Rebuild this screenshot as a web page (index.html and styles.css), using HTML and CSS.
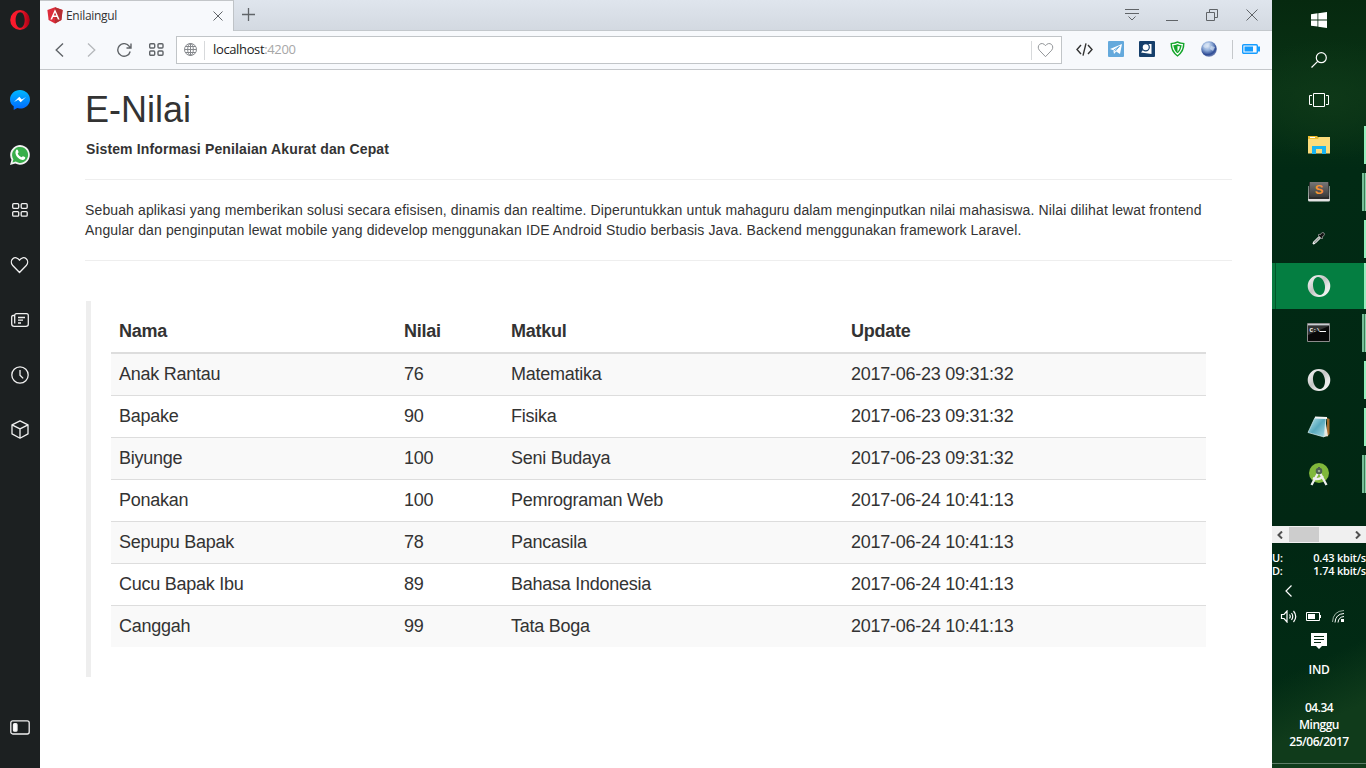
FILE: index.html
```html
<!DOCTYPE html>
<html lang="id">
<head>
<meta charset="utf-8">
<title>Enilaingul</title>
<link rel="stylesheet" href="styles.css">
</head>
<body>
<svg class="defs" width="0" height="0" aria-hidden="true">
  <defs>
    <linearGradient id="silver" x1="0" y1="0" x2="1" y2="1"><stop offset="0" stop-color="#fff"/><stop offset=".45" stop-color="#c4c4c4"/><stop offset=".7" stop-color="#e8e8e8"/><stop offset="1" stop-color="#f8f8f8"/></linearGradient>
    <linearGradient id="msg" x1="0" y1="0" x2="0" y2="1"><stop offset="0" stop-color="#00b8ff"/><stop offset="1" stop-color="#0066ff"/></linearGradient>
    <linearGradient id="red" x1="0" y1="0" x2="1" y2="0"><stop offset="0" stop-color="#ff1b2d"/><stop offset=".55" stop-color="#f0172a"/><stop offset="1" stop-color="#a70014"/></linearGradient>
    <linearGradient id="key" x1="0" y1="0" x2="0" y2="1"><stop offset="0" stop-color="#777"/><stop offset="1" stop-color="#3a3a3a"/></linearGradient>
    <linearGradient id="paper" x1="0" y1="0" x2="1" y2="1"><stop offset="0" stop-color="#c5edf2"/><stop offset=".5" stop-color="#58a9bd"/><stop offset="1" stop-color="#a9dbe4"/></linearGradient>
    <radialGradient id="globe" cx=".4" cy=".3" r=".75"><stop offset="0" stop-color="#e4edf9"/><stop offset=".4" stop-color="#8facd8"/><stop offset=".75" stop-color="#2f4c95"/><stop offset="1" stop-color="#8997bf"/></radialGradient>
    <symbol id="opera-silver" viewBox="0 0 24 24"><ellipse cx="12" cy="12" rx="8.600" ry="9.800" fill="none" stroke="url(#silver)" stroke-width="0"/><path fill="url(#silver)" fill-rule="evenodd" d="M12 1a11.300 11 0 1 0 0 22 11.300 11 0 0 0 0-22ZM10.800 3C14 2.600 17.300 6.500 17.900 11.500S16.600 20.700 13.200 21 6.700 17.500 6.100 12.500 7.400 3.400 10.800 3Z"/></symbol>
    <symbol id="heart" viewBox="0 0 18 18"><path d="M9 16.500 2 9.200C.3 7 .6 4.200 2.300 2.700c2-1.700 5-1.200 6.700 1.500 1.700-2.700 4.700-3.200 6.700-1.500C17.400 4.200 17.700 7 16 9.200Z"/></symbol>
  </defs>
</svg>
<div class="screen">
  <aside class="sidebar">
    <div class="side-logo"><svg width="20" height="20" viewBox="0 0 20 20"><path fill="url(#red)" fill-rule="evenodd" d="M10 0a9.800 10 0 1 0 0 20 9.800 10 0 0 0 0-20Zm.2 2.200c2.700 0 4.500 3.400 4.500 7.800s-1.800 7.800-4.500 7.800S5.600 14.400 5.600 10s1.900-7.800 4.600-7.800Z"/></svg></div>
    <div class="side-item"><svg width="20" height="20" viewBox="0 0 20 20"><path fill="url(#msg)" d="M10 0C4.400 0 0 4.200 0 9.400c0 2.900 1.400 5.200 3.700 6.900V20l3.500-1.900c.9.300 1.800.4 2.800.4 5.600 0 10-4 10-9.100S15.600 0 10 0Z"/><path fill="#fff" d="m4 12 5.300-5.200 2.500 2.600L16 7l-5.300 5.200-2.500-2.500Z"/></svg></div>
    <div class="side-item"><svg width="20" height="20" viewBox="0 0 20 20"><path fill="#f3f3f3" d="m0 20 1.500-5.200A9.800 9.800 0 1 1 5.300 18.500Z"/><path fill="#38ae4a" d="m2.500 17.500.9-3.200a8 8 0 1 1 2.300 2.300Z"/><path fill="#fff" d="M6.200 5c.7-.7 1.400-.5 1.700.3l.7 1.700c.1.500-.7 1.200-.9 1.600.8 1.800 2 3 3.800 3.700.5-.3 1-1.300 1.500-1.100l1.900.9c.6.300.3 1.400-.1 1.900-1.500 1.600-4.200.9-6.200-.7C6.400 11.500 4.300 8 6.200 5Z"/></svg></div>
    <div class="side-item"><svg class="line" width="17" height="14" viewBox="0 0 17 14"><rect x=".7" y=".7" width="6" height="4.600" rx="1"/><rect x="9.200" y=".7" width="6" height="4.600" rx="1"/><rect x=".7" y="8.600" width="6" height="4.600" rx="1"/><rect x="9.200" y="8.600" width="6" height="4.600" rx="1"/></svg></div>
    <div class="side-item"><svg class="line" width="20" height="18" viewBox="0 0 20 18"><use href="#heart" width="19" height="18"/></svg></div>
    <div class="side-item"><svg class="line" width="19" height="14" viewBox="0 0 19 14"><path d="M4 2.500H2Q.7 2.500.7 4v7q0 2.300 2.500 2.300H15q2.300 0 2.300-2V2.500Q17.300.7 15.500.7h-10Q3.700.7 3.700 2.500v8M7 4.500h7M7 7.200h5M7 10h3"/></svg></div>
    <div class="side-item"><svg class="line" width="19" height="18" viewBox="0 0 19 18"><circle cx="9" cy="9" r="8.200"/><path d="M9 4v5.200l3.200 3.200"/></svg></div>
    <div class="side-item"><svg class="line" width="19" height="19" viewBox="0 0 19 19"><path d="m9 .9 8 4v9l-8 4.300-8-4.300v-9Zm-8 4 8 4 8-4M9 9v9"/></svg></div>
    <div class="side-foot"><svg class="line" width="20" height="15" viewBox="0 0 20 15"><rect x=".8" y=".8" width="18.400" height="13.200" rx="2"/><rect x="3.500" y="3.700" width="3.500" height="7.500" rx="1" fill="#fff"/></svg></div>
  </aside>

  <main class="browser">
    <header class="tabbar">
      <div class="tab">
        <svg class="favicon" width="16" height="17" viewBox="0 0 16 17"><path fill="#dd2b3a" d="m8 .3 7.600 2.700-1.200 10L8 16.600 1.600 13 .4 3Z"/><path fill="#b52e31" d="m8 .3 7.600 2.700-1.200 10L8 16.600Z"/><path fill="#fff" fill-rule="evenodd" d="M8 2.300 3.400 12.400h1.700l1-2.300h3.800l1 2.300h1.700ZM8 5.500l1.300 3.100H6.700Z"/></svg>
        <span class="tab-title">Enilaingul</span>
        <svg class="stroke" width="10" height="10" viewBox="0 0 10 10"><path d="m.5.500 9 9m0-9-9 9"/></svg>
      </div>
      <svg class="newtab stroke cross" width="13" height="13" viewBox="0 0 13 13"><path d="M6.500 0v13M0 6.500h13"/></svg>
      <div class="window-controls">
        <svg class="stroke" width="14" height="12" viewBox="0 0 14 12"><path d="M0 .5h14M0 4.500h14M3.500 7.500 7 11l3.500-3.500"/></svg>
        <svg class="stroke" width="12" height="12" viewBox="0 0 12 12"><path d="M0 11.500h12"/></svg>
        <svg class="stroke" width="12" height="12" viewBox="0 0 12 12"><path d="M.5 3.500h8v8h-8zM3.500 3V.5h8v8H9"/></svg>
        <svg class="stroke" width="12" height="12" viewBox="0 0 12 12"><path d="m.5.500 11 11m0-11-11 11"/></svg>
      </div>
    </header>
    <nav class="toolbar">
      <div class="nav-buttons">
        <svg class="stroke bold" width="9" height="14" viewBox="0 0 9 14"><path d="M8 .5 1.200 7 8 13.500"/></svg>
        <svg class="stroke pale" width="9" height="14" viewBox="0 0 9 14"><path d="M1 .5 7.800 7 1 13.500"/></svg>
        <svg class="stroke bold" width="15" height="14" viewBox="0 0 15 14"><path d="M13.200 8.500A6.300 6.300 0 1 1 12.300 3.400L13.700 5M14 .5V5H9.500"/></svg>
        <svg class="stroke bold" width="15" height="13" viewBox="0 0 15 13"><rect x=".7" y=".7" width="5" height="4.300" rx="1"/><rect x="9" y=".7" width="5" height="4.300" rx="1"/><rect x=".7" y="8" width="5" height="4.300" rx="1"/><rect x="9" y="8" width="5" height="4.300" rx="1"/></svg>
      </div>
      <div class="address">
        <svg class="stroke globe" width="13" height="13" viewBox="0 0 13 13"><circle cx="6.500" cy="6.500" r="6"/><ellipse cx="6.500" cy="6.500" rx="2.800" ry="6"/><path d="M6.500.5v12M.5 6.500h12M1.500 3.500h10M1.500 9.500h10"/></svg>
        <i class="divider"></i>
        <span class="url">localhost<span class="port">:4200</span></span>
        <i class="divider end"></i>
        <svg class="stroke globe" width="17" height="16"><use href="#heart" width="17" height="16"/></svg>
      </div>
      <div class="extensions">
        <svg class="stroke dark" width="17" height="13" viewBox="0 0 17 13"><path d="M5 2 1 6.500 5 11M12 2l4 4.500-4 4.500M10 .3 7 12.700"/></svg>
        <svg width="16" height="16" viewBox="0 0 16 16"><rect width="16" height="16" rx="1" fill="#64a9dc"/><path fill="#fff" d="m2 8 12-5-2 10-3.800-2.500L6 13l-.7-3.700Z"/><path fill="none" stroke="#64a9dc" d="m5.500 9.300 6-4-4.500 5"/></svg>
        <svg width="16" height="16" viewBox="0 0 16 16"><rect width="16" height="16" rx="1" fill="#163f6b"/><path fill="#fff" d="M6 3h6.500v10L2 11.500 4 9Z"/><circle cx="6.700" cy="6.300" r="3.600" fill="#fff" stroke="#163f6b" stroke-width="1.200"/></svg>
        <svg width="15" height="16" viewBox="0 0 15 16"><path fill="#14a62b" d="M.5 2Q4 2 7.500.3 11 2 14.500 2q.3 9-7 13.700Q.2 11 .5 2Z"/><path fill="none" stroke="#fff" stroke-width="1.200" d="M2.700 3.700q2.800 0 4.800-1.200 2 1.200 4.800 1.200-.3 5.800-4.800 9.500-4.500-3.700-4.800-9.500Z"/><path fill="#fff" d="M7.500 5v6Q9.700 8.500 10 5.300q-1.300 0-2.500-.3Z"/></svg>
        <svg width="16" height="16" viewBox="0 0 16 16"><circle cx="8" cy="8" r="7.800" fill="url(#globe)"/><path fill="#d6e3f4" opacity=".65" d="M2 5q3-4 7-3L7 6 4 7zM10 5l4 1-2 4-3-2z"/></svg>
        <i class="ext-divider"></i>
        <svg width="18" height="10" viewBox="0 0 18 10"><rect x=".7" y=".7" width="14.600" height="8.600" rx="1" fill="none" stroke="#149cff" stroke-width="1.400"/><rect x="2.500" y="2.500" width="8.500" height="5" fill="#149cff"/><path fill="#149cff" d="M16 2.500h2v5h-2z"/></svg>
      </div>
    </nav>

    <section class="page">
      <h1 class="title">E-Nilai</h1>
      <p class="tagline">Sistem Informasi Penilaian Akurat dan Cepat</p>
      <hr class="rule">
      <p class="intro">Sebuah aplikasi yang memberikan solusi secara efisisen, dinamis dan realtime. Diperuntukkan untuk mahaguru dalam menginputkan nilai mahasiswa. Nilai dilihat lewat frontend<br>Angular dan penginputan lewat mobile yang didevelop menggunakan IDE Android Studio berbasis Java. Backend menggunakan framework Laravel.</p>
      <hr class="rule">
      <blockquote class="quote">
        <table class="grades">
          <colgroup><col class="c-name"><col class="c-score"><col class="c-course"><col></colgroup>
          <thead><tr><th>Nama</th><th>Nilai</th><th>Matkul</th><th>Update</th></tr></thead>
          <tbody>
            <tr><td>Anak Rantau</td><td>76</td><td>Matematika</td><td>2017-06-23 09:31:32</td></tr>
            <tr><td>Bapake</td><td>90</td><td>Fisika</td><td>2017-06-23 09:31:32</td></tr>
            <tr><td>Biyunge</td><td>100</td><td>Seni Budaya</td><td>2017-06-23 09:31:32</td></tr>
            <tr><td>Ponakan</td><td>100</td><td>Pemrograman Web</td><td>2017-06-24 10:41:13</td></tr>
            <tr><td>Sepupu Bapak</td><td>78</td><td>Pancasila</td><td>2017-06-24 10:41:13</td></tr>
            <tr><td>Cucu Bapak Ibu</td><td>89</td><td>Bahasa Indonesia</td><td>2017-06-24 10:41:13</td></tr>
            <tr><td>Canggah</td><td>99</td><td>Tata Boga</td><td>2017-06-24 10:41:13</td></tr>
          </tbody>
        </table>
      </blockquote>
    </section>
  </main>

  <aside class="taskbar">
    <div class="sys"><svg width="16" height="16" viewBox="0 0 16 16"><path fill="#fff" d="M0 2.200 6.500 1.300v6.200H0ZM7.300 1.200 16 0v7.500H7.300ZM0 8.400h6.500v6.200L0 13.700ZM7.300 8.400H16V16l-8.700-1.200Z"/></svg></div>
    <div class="sys"><svg class="white" width="16" height="16" viewBox="0 0 16 16"><circle cx="10.300" cy="5.700" r="5"/><path d="M6.700 9.300.5 15.500"/></svg></div>
    <div class="sys"><svg class="white crisp" width="20" height="14" viewBox="0 0 20 14"><path d="M4.500.5h11v13h-11zM3 2.500H.5v9H3M17 2.500h2.500v9H17"/></svg></div>
    <div class="apps">
      <div class="app"><svg width="22" height="18" viewBox="0 0 22 18"><path fill="#eebd31" d="M0 0h9l1 1h12v16H0Z"/><path fill="#fbdc7c" d="M0 3h10l1-2h11v16.500H0Z"/><path fill="#19b5f1" d="M4 10h14v8h-4v-5H8v5H4Z"/><path fill="#fff" d="M2 1h5v1H2z"/></svg></div>
      <div class="app multi"><svg width="24" height="22" viewBox="0 0 24 22"><path fill="#e4e4e4" d="M1.500 5 1 19q0 1.500 1.500 1.500h19Q23 20.500 23 19L22.500 5Z"/><path fill="#2c2c2c" d="M2 1h20l.3 17H1.700Z"/><path fill="url(#key)" d="M3 1h18l.8 13.500-1.500 1.500H3.700l-1.500-1.500Z"/><text x="12" y="13" text-anchor="middle" class="key-label">S</text></svg></div>
      <div class="app"><svg width="13" height="13" viewBox="0 0 13 13"><path fill="#999" stroke="#fff" d="m1 12 .5-2L7 4.500 8.500 6 3 11.500Z"/><path fill="#111" stroke="#aaa" stroke-width=".7" d="m6 3 1.200-.8L8 3l1.500-2q1.500-1 2.500 0t0 2.500L10 5l.8 1L10 7Z"/></svg></div>
      <div class="app active"><svg width="24" height="24"><use href="#opera-silver"/></svg></div>
      <div class="app multi"><svg width="23" height="19" viewBox="0 0 23 19"><path fill="#080808" stroke="#8b8b8b" d="M.5.500h22v18H.5z"/><path fill="#c8cdd0" d="M1 1h21v1.500H1z"/><path fill="#333" d="M1 3h21L1 12Z"/><text x="2.500" y="9" class="prompt">C:\</text><path stroke="#fff" d="M13 8.500h6"/></svg></div>
      <div class="app"><svg width="24" height="24"><use href="#opera-silver"/></svg></div>
      <div class="app"><svg width="24" height="22" viewBox="0 0 24 22"><path fill="#a76c2d" d="m20 2 2.500 1v15L20 21Z"/><path fill="#e8e8df" d="m18 2 3 18-4 1Z"/><path fill="url(#paper)" stroke="#d9f1f3" stroke-width=".7" d="M8 1.500 19 2l-2 19-16-4.500Z"/><path stroke="#f5f5f5" stroke-width="2" d="m8 1.500 12 .5"/></svg></div>
      <div class="app multi"><svg width="22" height="24" viewBox="0 0 22 24"><circle cx="11" cy="11" r="10" fill="#80b83b"/><path fill="none" stroke="#eee" stroke-width="2.300" d="m10 11-6.500 12M12 11l6.500 12M5 16q6 3 10-2"/><circle cx="11" cy="9" r="2.300" fill="#9aab91" stroke="#4c5f50" stroke-width="2"/><path fill="#4c5f50" d="M10 5h2v3h-2z"/></svg></div>
    </div>
    <div class="scrollbar">
      <svg width="6" height="8" viewBox="0 0 6 8"><path d="M5 .5 1.500 4 5 7.500"/></svg><i class="thumb"></i><svg width="6" height="8" viewBox="0 0 6 8"><path d="M1 .5 4.500 4 1 7.500"/></svg>
    </div>
    <div class="netspeed"><div><span>U:</span><span>0.43 kbit/s</span></div><div><span>D:</span><span>1.74 kbit/s</span></div></div>
    <div class="chevron"><svg class="white" width="7" height="12" viewBox="0 0 7 12"><path d="M6.500.5 1 6l5.500 5.500"/></svg></div>
    <div class="tray">
      <svg class="white" width="17" height="13" viewBox="0 0 17 13"><path d="M1.500 4.500H4l3-3.500v11L4 8.500H1.500ZM9.500 4.500q1.500 2 0 4M11.500 3q2.500 3.500 0 7M13.500 1q4.500 5.500 0 11"/></svg>
      <svg width="15" height="9" viewBox="0 0 15 9"><path fill="none" stroke="#fff" d="M.5.500h13v8H.5z"/><path fill="#fff" d="M2 2h7v5H2zM14 3h1v3h-1z"/></svg>
      <svg width="13" height="13" viewBox="0 0 13 13"><path fill="none" stroke="#9cb1a3" d="M.5 12Q1 1 12 .5"/><path fill="none" stroke="#fff" d="M3 12.500Q3.500 4 12 3.500M6 12.500Q6.500 7 12 6.500"/><path fill="#fff" d="M9 9h3v3H9z"/></svg>
    </div>
    <div class="notice"><svg width="16" height="16" viewBox="0 0 16 16"><path fill="#fff" d="M0 0h16v13h-5l-3 3-3-3H0Z"/><path stroke="#062b14" d="M3 3.500h10M3 6.500h10M3 9.500h7"/></svg></div>
    <div class="lang">IND</div>
    <div class="clock"><span>04.34</span><span>Minggu</span><span>25/06/2017</span></div>
    <i class="desktop-edge"></i>
  </aside>
</div>
</body>
</html>
```
FILE: styles.css
```css
* { box-sizing: border-box; }
body { margin: 0; overflow: hidden; font-family: "Liberation Sans", Arial, sans-serif; color: #333; }
svg { display: block; flex: none; }
.defs { position: absolute; }
.screen { display: grid; grid-template-columns: 40px 1232px 94px; width: 1366px; height: 768px; background: #fff; }

.sidebar { display: flex; flex-direction: column; align-items: center; background: #1c2021; height: 768px; }
.side-logo { height: 72px; padding-top: 10px; }
.side-item { display: flex; align-items: center; height: 55px; }
.side-foot { margin-top: auto; padding-bottom: 33px; }
.line { fill: none; stroke: #f0f0f0; stroke-width: 1.3; stroke-linejoin: round; }

.browser { display: flex; flex-direction: column; min-width: 0; }
.tabbar { display: flex; height: 31px; background: linear-gradient(#dfe5ed, #d3d9e1); border-bottom: 1px solid #c3c8cc; }
.tab { display: flex; align-items: center; width: 194px; height: 31px; padding: 0 10px 1px 7px; background: #f7f9fc; border-top: 1px solid #c3c6c9; border-right: 1px solid #bfc3c7; }
.tab-title { flex: 1; padding-left: 3px; font: 12px "Open Sans", sans-serif; letter-spacing: -.3px; color: #333; }
.newtab { margin: 8px 0 0 8px; }
.stroke { fill: none; stroke: #606468; stroke-width: 1; }
.cross { stroke-width: 1.3; }
.bold { stroke-width: 1.4; }
.pale { stroke: #b5b8bb; stroke-width: 1.3; }
.dark { stroke: #333; stroke-width: 1.4; }
.globe { stroke: #85888c; }
.window-controls { display: flex; gap: 28px; margin: 9px 14px 0 auto; }
.window-controls svg:first-child { margin-right: -1px; }
.toolbar { display: flex; align-items: center; height: 39px; padding-bottom: 1px; background: #f7f9fc; border-bottom: 1px solid #c4c7ca; }
.nav-buttons { display: flex; align-items: center; width: 136px; padding-left: 15px; gap: 22px; }
.nav-buttons svg:nth-child(2) { margin-left: 1px; }
.nav-buttons svg:nth-child(3) { margin-left: -1px; }
.nav-buttons svg:nth-child(4) { margin-left: -5px; }
.address { display: flex; align-items: center; width: 886px; height: 28px; margin-top: 1px; padding: 0 7px; border: 1px solid #c1c5c8; background: #fff; }
.address svg:first-child { margin-bottom: 2px; }
.divider { width: 1px; height: 19px; margin: 0 8px 0 7px; background: #d7d9db; }
.divider.end { margin: 0 5px 0 auto; }
.url { padding-bottom: 2px; font: 13px "Open Sans", sans-serif; letter-spacing: -.36px; color: #222; }
.port { color: #a7a7a7; }
.extensions { display: flex; align-items: center; flex: 1; padding: 0 0 1px 14px; gap: 15px; }
.extensions svg:nth-child(5) { margin-left: 1px; }
.ext-divider { width: 1px; height: 19px; background: #c5c8cb; }
.extensions svg:last-child { margin-left: -6px; }

.page { padding: 20px 40px 0 45px; }
.title { margin: 0; font-size: 36px; font-weight: 400; line-height: 40px; }
.tagline { margin: 9px 0 0 1px; font-size: 14px; font-weight: 700; line-height: 20px; letter-spacing: .13px; }
.rule { margin: 20px 0; border: 0; border-top: 1px solid #eee; }
.intro { margin: 0; font-size: 14px; line-height: 20px; letter-spacing: .127px; white-space: nowrap; }
.quote { height: 376px; margin: 40px 0 0 1px; padding: 10px 26px 0 20px; border-left: 5px solid #eee; }
.grades { width: 1095px; table-layout: fixed; border-spacing: 0; font-size: 18px; line-height: 25px; letter-spacing: -.25px; }
.c-name { width: 285px; }
.c-score { width: 107px; }
.c-course { width: 340px; }
.grades th { height: 43px; padding: 0 8px; border-bottom: 2px solid #ddd; text-align: left; }
.grades td { height: 42px; padding: 0 8px; border-top: 1px solid #ddd; }
.grades tbody tr:first-child td { height: 41px; border-top: 0; }
.grades tbody tr:nth-child(odd) { background: #f9f9f9; }

.taskbar { display: flex; flex-direction: column; height: 768px; background: radial-gradient(ellipse 100px 60px at 60% 100px, #0e3818, transparent), linear-gradient(155deg, transparent 84%, #103b1b 92%), linear-gradient(#06290f 0, #093315 90px, #012a14 170px, #012713 530px, #022d15 768px); color: #fff; font: 12px/17px "Open Sans", sans-serif; overflow: hidden; }
.sys { display: flex; align-items: center; justify-content: center; height: 40px; }
.apps { margin-top: 2px; height: 404px; }
.app { display: flex; align-items: center; justify-content: center; height: 47px; padding: 0 1px 2px 0; background: linear-gradient(#95efbd, #95efbd) right 4px / 2px 38px no-repeat; }
.app.multi { background: linear-gradient(90deg, #78bd98 2px, #397c56 2px, #397c56 3px, #8bd4ab 3px) right 4px / 4px 38px no-repeat; }
.app.active { height: 46px; margin-bottom: 1px; padding-bottom: 0; background: linear-gradient(90deg, #087a3f 3px, #01572a 3px, #01572a 4px, #047e41 4px, #047e41 92px, #95efbd 92px); }
.white { fill: none; stroke: #fff; stroke-width: 1.2; }
.crisp { stroke-width: 1; }
.key-label { fill: #f79432; font: 700 13px "Liberation Sans", sans-serif; }
.prompt { fill: #fff; font: 700 6px "Liberation Mono", monospace; }
.scrollbar { display: flex; align-items: center; height: 17px; padding: 0 5px; background: #f0f0f0; fill: none; stroke: #505050; stroke-width: 2; }
.thumb { width: 30px; height: 15px; margin: 0 auto 0 6px; background: #cdcdcd; }
.netspeed { margin-top: 8px; font-size: 11px; font-weight: 600; line-height: 13px; letter-spacing: -.2px; white-space: nowrap; }
.netspeed div { display: flex; justify-content: space-between; }
.chevron { padding: 8px 0 0 13px; }
.tray { display: flex; align-items: center; gap: 9px; height: 16px; margin: 11px 0 0 8px; }
.tray svg:last-child { margin-left: 2px; }
.notice { display: flex; justify-content: center; margin-top: 9px; }
.lang { margin-top: 12px; text-align: center; letter-spacing: -.3px; font-weight: 600; }
.clock { display: flex; flex-direction: column; align-items: center; margin-top: 21px; letter-spacing: -.5px; font-weight: 600; }
.desktop-edge { height: 1px; margin-top: auto; margin-bottom: 4px; background: #5d7c67; }
```
